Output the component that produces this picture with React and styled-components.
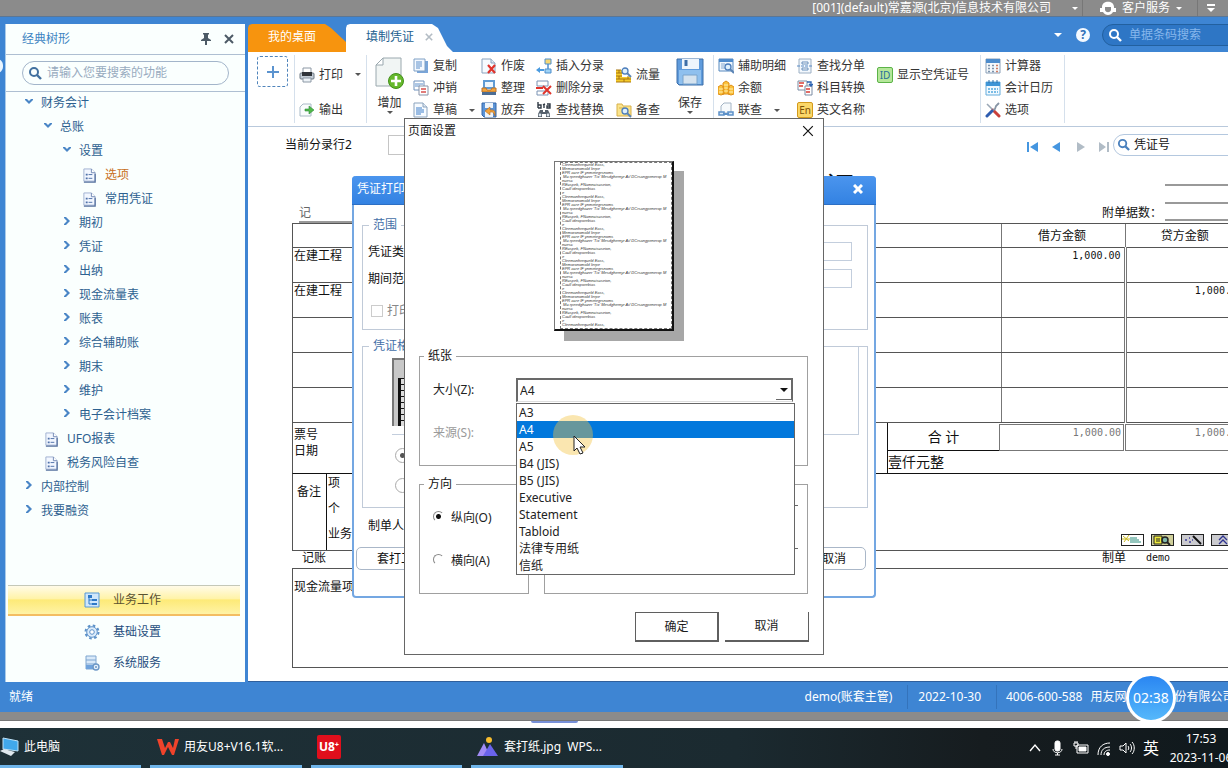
import React from 'react';
import styled, { createGlobalStyle, css } from 'styled-components';

const SANS = '"Noto Sans", "Noto Sans CJK SC", sans-serif';
const MONO = '"DejaVu Sans Mono", "Noto Sans CJK SC", monospace';

const GlobalStyle = createGlobalStyle`
  * {
    box-sizing: border-box;
  }

  body {
    margin: 0;
    overflow: hidden;
    font-family: ${SANS};
    font-size: 12px;
    line-height: 16px;
    color: #1c1c1c;
  }

  button, input, select {
    font: inherit;
    color: inherit;
    margin: 0;
    padding: 0;
  }

  button {
    border: 0;
    background: none;
    white-space: nowrap;
  }

  ul {
    list-style: none;
    margin: 0;
    padding: 0;
  }

  a {
    color: inherit;
    text-decoration: none;
  }

  svg {
    display: block;
    flex: none;
  }
`

/* ---------- icons ---------- */

const Doc = () => (
  <>
    <path d="M1 1h9l4 4v10H1z" fill="#f7fbff" stroke="#8ba3bd" />
    <path d="M10 1v4h4" fill="#dfe9f3" stroke="#8ba3bd" />
  </>
)

const Lens = ({ x = 9, y = 7, r = 3 }) => (
  <>
    <circle cx={x} cy={y} r={r} fill="#dff0fc" stroke="#4b7dbb" strokeWidth="1.3" />
    <path d={`M${x + r - 1} ${y + r - 1}l4 4`} stroke="#5b84b5" strokeWidth="2" />
  </>
)

const glyphs = {
  print: (
    <>
      <path d="M4 1h8v5H4z" fill="#fff" stroke="#8c98a5" />
      <rect x="1" y="6" width="14" height="6" rx="1" fill="#c3ccd6" stroke="#6d7883" />
      <path d="M3 5h10v4H3z" fill="#30343a" />
      <path d="M4 11h8v4H4z" fill="#eef3f8" stroke="#8c98a5" />
    </>
  ),
  output: (
    <>
      <path d="M1 5l3-3h8v12H1z" fill="#fafcfd" stroke="#a9bac6" />
      <path d="M6 7h4V4l5 4-5 4V9H6z" fill="#51b948" stroke="#2e8b3c" strokeWidth=".6" />
    </>
  ),
  copy: (
    <>
      <path d="M4 3h11v12H4z" fill="#79a5d9" />
      <path d="M1 1h11v12H1z" fill="#f4f9ff" stroke="#7fa0c5" />
      <path d="M3 4h6M3 6h6M3 8h6M3 10h4" stroke="#5c8fca" />
    </>
  ),
  offset: (
    <>
      <path d="M1 1h10v9H1z" fill="#fff" stroke="#6f91bd" />
      <path d="M2 4h8M2 6h5" stroke="#5c8fca" />
      <path d="M6 6h9v9H6z" fill="#fff" stroke="#8893a8" />
      <path d="M8 9h5M8 12h5" stroke="#d7504d" strokeWidth="1.5" />
    </>
  ),
  draft: (
    <>
      <Doc />
      <path d="M3 6h6M3 8h8M3 10h8M3 12h5" stroke="#3f7fc9" />
    </>
  ),
  void: (
    <>
      <Doc />
      <path d="M7 7l7 8M14 7l-7 8" stroke="#e0342c" strokeWidth="2.2" />
    </>
  ),
  arrange: (
    <>
      <path d="M3 1h10v7H3z" fill="#eef6fd" stroke="#5f9bd4" strokeWidth="2" />
      <path d="M1 8h4l1 2h4l1-2h4v4H1z" fill="#f2a53c" stroke="#b7702a" />
      <path d="M1 12h14v3H1z" fill="#4c6d94" />
    </>
  ),
  discard: (
    <>
      <path d="M1 1h14v14H3l-2-2z" fill="#5b93d6" stroke="#3467a8" />
      <path d="M4 1h8v5H4z" fill="#eef4fa" />
      <path d="M4 9h8v6H4z" fill="#eef4fa" />
      <path d="M14 14v-3c0-2-1-3-3-3H9V5L4 9l5 4v-3h2c1 0 2 1 3 4z" fill="#f3a33a" stroke="#b66a1b" strokeWidth=".6" />
    </>
  ),
  insert: (
    <>
      <path d="M9 1h6v5H9z" fill="#f6d673" stroke="#4f8fcc" />
      <path d="M9 11h6v4H9z" fill="#9fd2f5" stroke="#4f8fcc" />
      <path d="M12 6v5" stroke="#4f8fcc" strokeWidth="1.5" />
      <path d="M0 12l4-3v2h4v2H4v2z" fill="#4a9be0" />
    </>
  ),
  remove: (
    <>
      <path d="M1 1h11v5H1zM1 11h11v4H1z" fill="#fff" stroke="#7b93b4" />
      <path d="M0 8h7" stroke="#e0342c" strokeWidth="2" />
      <path d="M7 6l8 8M15 6l-8 8" stroke="#e0342c" strokeWidth="2" />
    </>
  ),
  replace: (
    <>
      <path d="M2 0v6M2 3h3v3H2M7 3l2-1M8 6V3M11 2h3v4h-3V4h3" fill="none" stroke="#2f3944" strokeWidth="1.4" />
      <path d="M4 8h3v2h2V8h3l2 4v3h-4v-3H6v3H2v-3z" fill="#56616c" />
      <circle cx="4" cy="13" r="1.4" fill="#dde6ee" />
      <circle cx="12" cy="13" r="1.4" fill="#dde6ee" />
    </>
  ),
  flow: (
    <>
      <path d="M0 3h6v12H0zM6 10h9v5H6z" fill="#f5cb2b" />
      <path d="M0 3h5M0 6h6M0 9h6M0 12h15M0 15h15M3 3v3M3 9v3M8 12v3M12 9v3" stroke="#a67410" />
      <Lens x={9} y={4} />
    </>
  ),
  check: (
    <>
      <path d="M1 2h5l1 2h8v10H1z" fill="#fbe48b" stroke="#d7b04a" />
      <path d="M3 6h5" stroke="#d7b04a" />
      <Lens x={9} y={9} />
    </>
  ),
  detail: (
    <>
      <path d="M1 1h14v12H1z" fill="#eff6fc" stroke="#5689bf" />
      <path d="M1 1h14v3H1z" fill="#4f8bcb" />
      <path d="M3 6h4M3 8h3M3 10h4" stroke="#86a9cf" />
      <Lens x={10} y={9} />
    </>
  ),
  balance: (
    <>
      <path d="M5 3l3-2 3 2v11H5zM0 7l3-2 3 2v7l-3 1-3-1zM10 7l3-2 3 2v7l-3 1-3-1z" fill="#fbc23c" stroke="#df8f16" />
      <path d="M1 9h4M1 12h4M6 5h4M11 9h4M11 12h4M6 8h4M6 11h4" stroke="#fff0b0" />
    </>
  ),
  link: (
    <>
      <path d="M3 4l3-3h7v10H3z" fill="#f7fafc" stroke="#a4b4c4" />
      <path d="M1 10h5v3H1zM10 10h5v3h-5z" fill="#d9e9f7" stroke="#5d91c9" strokeWidth="1.5" />
      <path d="M5 12h6" stroke="#5d91c9" strokeWidth="2" />
    </>
  ),
  split: (
    <>
      <path d="M2 1h12v14H2z" fill="#f3f8fd" stroke="#9db0c4" />
      <path d="M5 4h6v2H5zM5 10h6v2H5z" fill="#fff" stroke="#688fbc" />
      <path d="M0 8h16" stroke="#5a8bc5" strokeDasharray="3 1" />
    </>
  ),
  convert: (
    <>
      <path d="M1 1h9v9H1z" fill="#fff" stroke="#7a8ba3" />
      <path d="M2 3h5M2 6h4" stroke="#d93d36" strokeWidth="1.6" />
      <path d="M8 6h7v9H8z" fill="#fff" stroke="#7a8ba3" />
      <path d="M9 9h4M9 12h4" stroke="#d93d36" strokeWidth="1.4" />
      <path d="M10 2h4v4M12 4l2 2 2-2" fill="none" stroke="#2c62b1" strokeWidth="1.4" />
    </>
  ),
  calculator: (
    <>
      <path d="M1 1h14v14H1z" fill="#f5f8fb" stroke="#8aa0b8" />
      <path d="M1 1h14v4H1z" fill="#4d8ccc" />
      <path d="M3 7.500h2M7 7.500h2M3 10.500h2M7 10.500h2M3 13.500h2M7 13.500h2" stroke="#7c93ad" strokeWidth="1.6" />
      <path d="M11 7.500h2M11 10.500h2M11 13.500h2" stroke="#cf7b62" strokeWidth="1.6" />
    </>
  ),
  calendar: (
    <>
      <path d="M1 2h14v13H1z" fill="#f2f9fe" stroke="#64acdc" />
      <path d="M1 2h14v4H1z" fill="#3f95d6" />
      <path d="M4 0v3M8 0v3M12 0v3" stroke="#2c6ea9" />
      <path d="M3 9h10M3 12h10" stroke="#79bce6" strokeWidth="2" strokeDasharray="2 1" />
    </>
  ),
  tools: (
    <>
      <path d="M2 2l6 6" stroke="#9aa7b5" strokeWidth="1.6" />
      <path d="M8 8l6 6" stroke="#c9403b" strokeWidth="3" strokeLinecap="round" />
      <path d="M14 1l-3 3-1 3-3 2" fill="none" stroke="#8795a5" strokeWidth="1.8" />
      <path d="M7 9l-5 5" stroke="#2f5db0" strokeWidth="3" strokeLinecap="round" />
    </>
  ),
  leaf: (
    <>
      <path d="M2 1h8l4 4v9H2z" fill="#f2f7ff" stroke="#9fb0d0" />
      <path d="M10 1v4h4" fill="#fff" stroke="#7289b4" />
      <path d="M5 6v2M5 10v2" stroke="#4d70a8" strokeWidth="2" />
      <path d="M7 7h4M7 11h4" stroke="#4d70a8" />
      <path d="M2 15h12V6" fill="none" stroke="#56719f" strokeWidth="1.4" />
    </>
  ),
  work: (
    <>
      <path d="M1 1h14v14H1z" fill="#cfe7fb" stroke="#5799d6" />
      <path d="M4 3h4v3H4zM8 7h5v2H8zM8 11h5v2H8z" fill="#2d79c7" />
      <path d="M5 6v6h4M5 8h4" fill="none" stroke="#2d79c7" />
    </>
  ),
  gear: (
    <>
      <circle cx="8" cy="8" r="6.500" fill="none" stroke="#5e92c9" strokeWidth="2" strokeDasharray="2.600 2.500" />
      <circle cx="8" cy="8" r="5.300" fill="#dcecfb" stroke="#5e92c9" />
      <circle cx="8" cy="8" r="2.300" fill="#fff" stroke="#5e92c9" />
    </>
  ),
  service: (
    <>
      <path d="M2 1h10v13H2z" fill="#d8e9f9" stroke="#7ea6d0" />
      <path d="M2 5h10M2 9h10" stroke="#7ea6d0" />
      <path d="M2 10h8v4H2z" fill="#6fa3dc" />
      <circle cx="12" cy="12" r="3" fill="#e6f1fb" stroke="#6c97c6" strokeWidth="1.4" />
      <circle cx="12" cy="12" r="1" fill="#6c97c6" />
    </>
  ),
}

const Icon = ({ name, size = 16 }) => (
  <svg width={size} height={size} viewBox="0 0 16 16" fill="none" aria-hidden="true">{glyphs[name]}</svg>
)

const SearchIcon = ({ color, size = 14 }) => (
  <svg width={size} height={size} viewBox="0 0 14 14" fill="none" stroke={color} aria-hidden="true">
    <circle cx="6" cy="6" r="4" strokeWidth="2" />
    <path d="M9 9l4 4" strokeWidth="2.400" />
  </svg>
)

const Cross = ({ size = 10, weight = 2, color = '#4c5a66' }) => (
  <svg width={size} height={size} viewBox="0 0 10 10" stroke={color} strokeWidth={weight} aria-hidden="true">
    <path d="M1 1l8 8M9 1l-8 8" />
  </svg>
)

const Caret = styled.span`
  flex: none;
  width: 0;
  height: 0;
  border: 3px solid transparent;
  border-top-color: ${p => p.$color || '#555'};
  border-bottom: 0;
`

/* ---------- frame ---------- */

const Page = styled.div`
  position: relative;
  min-height: 100vh;
  display: flex;
  flex-direction: column;
  overflow: hidden;
  background-color: #fff;
`

const TitleBar = styled.header`
  height: 17px;
  display: flex;
  justify-content: flex-end;
  overflow: hidden;
  background-color: #8b8b8b;
  border-bottom: 1px solid #5b7694;
  color: white;
  line-height: 14px;
  white-space: nowrap;
`

const TitlePart = styled.div`
  display: flex;
  align-items: center;
  gap: ${p => p.$gap || 6}px;
  padding: 0 ${p => p.$right || 0}px 0 ${p => p.$left || 0}px;
  border-right: ${p => (p.$last ? 0 : 1)}px solid #777;
`

const Workspace = styled.div`
  flex: 1;
  display: grid;
  grid-template-columns: 5px 240px 1fr;
  background-color: #3e85d3;
`

const Rail = styled.div`
  overflow: hidden;
  padding-top: 42px;
`

const RailButton = styled.button`
  display: block;
  width: 12px;
  height: 14px;
  margin-left: -9px;
  border: 3px solid #e9f5ff;
  border-radius: 7px;
`

/* ---------- side tree ---------- */

const Side = styled.aside`
  display: flex;
  flex-direction: column;
  margin-top: 7px;
  background-color: #fafffe;
  border-left: 1px solid #a9cbea;
`

const SideHead = styled.div`
  height: 31px;
  display: flex;
  align-items: center;
  gap: 12px;
  padding: 0 11px 0 16px;
  border-bottom: 1px solid #aebfd2;
  color: #3d84c2;
`

const SideTitle = styled.span`
  flex: 1;
`

const SideSearch = styled.label`
  display: flex;
  align-items: center;
  gap: 5px;
  height: 24px;
  margin: 6px 16px 6px 16px;
  padding: 0 5px;
  border: 1px solid #a3b5ca;
  border-radius: 12px;
`

const SearchInput = styled.input`
  flex: 1;
  min-width: 0;
  border: 0;
  outline: 0;
  background: none;

  &::placeholder {
    color: ${p => p.$hint};
    opacity: 1;
  }
`

const Tree = styled.ul`
  flex: 1;
  border-top: 1px solid #aebfd2;
`

const TreeRow = styled.li`
  height: 24px;
  padding-left: ${p => 19 + p.$level * 19}px;
`

const TreeLink = styled.a`
  display: flex;
  align-items: center;
  gap: 8px;
  height: 22px;
  color: ${p => (p.$hot ? '#c8701c' : '#2d6190')};
`

const tree = [
  [0, 'open', '财务会计'],
  [1, 'open', '总账'],
  [2, 'open', '设置'],
  [3, 'leaf', '选项', true],
  [3, 'leaf', '常用凭证'],
  [2, 'shut', '期初'],
  [2, 'shut', '凭证'],
  [2, 'shut', '出纳'],
  [2, 'shut', '现金流量表'],
  [2, 'shut', '账表'],
  [2, 'shut', '综合辅助账'],
  [2, 'shut', '期末'],
  [2, 'shut', '维护'],
  [2, 'shut', '电子会计档案'],
  [1, 'leaf', 'UFO报表'],
  [1, 'leaf', '税务风险自查'],
  [0, 'shut', '内部控制'],
  [0, 'shut', '我要融资'],
]

const Arrow = ({ open }) => (
  <svg width="8" height="12" viewBox="0 0 8 12" fill="#4a86c6" aria-hidden="true">
    <path d={open ? 'M0 2h2l2 2 2-2h2v1L4 7 0 3z' : 'M1 0h2l4 4-4 4H1V7l3-3-3-3z'} />
  </svg>
)

const SideNav = styled.nav`
  padding: 0 5px 4px 2px;
`

const SideNavLink = styled.a`
  display: flex;
  align-items: center;
  gap: 13px;
  height: 31px;
  padding-left: 76px;
  color: #274f80;

  ${p => p.$active && css`
    background: linear-gradient(#fffbe8, #fff3a8 45%, #fdea78 50%, #fff3a6);
    border-top: 1px solid #c4c8b8;
    border-bottom: 2px solid #f3bd62;
    color: #5a5230;
  `}
`

const Sidebar = () => (
  <Side>
    <SideHead>
      <SideTitle>经典树形</SideTitle>
      <svg width="12" height="12" viewBox="0 0 12 12" fill="#4c5a66" aria-hidden="true">
        <path d="M3 0h6v1L8 2v3l3 2v1H7v4H5V8H1V7l3-2V2L3 1z" />
      </svg>
      <button aria-label="关闭"><Cross /></button>
    </SideHead>
    <SideSearch>
      <SearchIcon color="#41709f" />
      <SearchInput $hint="#98abbe" placeholder="请输入您要搜索的功能" aria-label="搜索功能" />
    </SideSearch>
    <Tree>
      {tree.map(([level, kind, label, hot]) => (
        <TreeRow key={label} $level={level}>
          <TreeLink href="#" $hot={hot}>
            {kind === 'leaf' ? <Icon name="leaf" size={15} /> : <Arrow open={kind === 'open'} />}
            {label}
          </TreeLink>
        </TreeRow>
      ))}
    </Tree>
    <SideNav>
      <SideNavLink href="#" $active><Icon name="work" />业务工作</SideNavLink>
      <SideNavLink href="#"><Icon name="gear" />基础设置</SideNavLink>
      <SideNavLink href="#"><Icon name="service" />系统服务</SideNavLink>
    </SideNav>
  </Side>
)

/* ---------- tabs ---------- */

const Main = styled.main`
  min-width: 0;
  display: flex;
  flex-direction: column;
  margin-left: 3px;
  border-bottom: 1px solid #2f5f9c;
  overflow: hidden;
`

const TabBar = styled.div`
  display: flex;
  height: 35px;
  padding-top: 7px;
`

const Tab = styled.button`
  display: flex;
  align-items: center;
  gap: 11px;
  width: ${p => p.$width}px;
  padding: 0 0 2px 20px;
  background-color: ${p => (p.$active ? '#fff' : '#f7940e')};
  color: ${p => (p.$active ? '#22608f' : '#fff')};
  clip-path: polygon(0 4px, 1px 1px, 4px 0, calc(100% - 21px) 0, calc(100% - 15px) 4px, ${p => (p.$active ? 'calc(100% - 6px) 22px, 100% 100%' : '100% 18px, 100% 100%')}, 0 100%);
`

const TabTools = styled.div`
  flex: 1;
  display: flex;
  justify-content: flex-end;
  align-items: flex-start;
  gap: 12px;
`

const Help = styled.button`
  width: 14px;
  height: 14px;
  margin: 4px 0;
  border-radius: 7px;
  background-color: #f4f9ff;
  color: #2f70b8;
  font-weight: 700;
  line-height: 14px;
`

const ToolCaret = styled(Caret)`
  margin: 9px 2px 0 0;
  border-width: 4px 4px 0;
`

const BarcodeSearch = styled.label`
  display: flex;
  align-items: center;
  gap: 7px;
  width: 160px;
  height: 22px;
  margin-right: -34px;
  padding-left: 5px;
  border: 1px solid #22609f;
  border-radius: 11px;
  background-color: #2e76c5;
`

/* ---------- ribbon ---------- */

const Ribbon = styled.div`
  display: flex;
  height: 75px;
  padding: 3px 0 3px 8px;
  background-color: #fff;
  border-bottom: 1px solid #b9c9dc;
`

const AddBox = styled.button`
  width: 31px;
  height: 31px;
  margin: 1px 6px 0 1px;
  border: 1px dashed #4f84bb;
  border-radius: 3px;
  display: grid;
  place-items: center;
`

const Group = styled.div`
  display: flex;
  padding: 0 0 0 4px;
  border-left: 1px solid #d5e0ec;
`

const RibbonColumn = styled.div`
  width: ${p => p.$width}px;
  display: flex;
  flex-direction: column;
  padding-top: ${p => (p.$loose ? 2 : 0)}px;
`

const RibbonButton = styled.button`
  flex: none;
  display: flex;
  align-items: center;
  gap: 4px;
  height: ${p => (p.$loose ? 35 : 22)}px;
  color: #333;

  ${Caret} {
    margin-left: 8px;
  }
`

const BigButton = styled.button`
  width: ${p => p.$width}px;
  display: flex;
  flex-direction: column;
  align-items: center;
  padding: 2px ${p => p.$right || 0}px 0 0;
  color: #333;

  svg {
    margin-bottom: 6px;
  }
`

const TextIcon = styled.span`
  width: 16px;
  height: 16px;
  border: 1px solid ${p => p.$edge};
  border-radius: 2px;
  background-color: ${p => p.$fill};
  color: ${p => p.$ink};
  font-size: 10px;
  line-height: 14px;
  text-align: center;
`

const Column = ({ width, loose, items }) => (
  <RibbonColumn $width={width} $loose={loose}>
    {items.map(([icon, label, caret]) => (
      <RibbonButton key={label} $loose={loose}>
        {icon === 'en' && <TextIcon $edge="#d39a1c" $fill="#fbd768" $ink="#7c5206">En</TextIcon>}
        {icon === 'id' && <TextIcon $edge="#5cb348" $fill="#b5e79a" $ink="#286f9a">ID</TextIcon>}
        {glyphs[icon] && <Icon name={icon} />}
        {label}
        {caret && <Caret />}
      </RibbonButton>
    ))}
  </RibbonColumn>
)

const RibbonBar = () => (
  <Ribbon>
    <AddBox aria-label="添加">
      <svg width="14" height="14" viewBox="0 0 14 14" stroke="#5b93cf" strokeWidth="2"><path d="M7 1v12M1 7h12" /></svg>
    </AddBox>
    <Group>
      <Column loose width={67} items={[['print', '打印', true], ['output', '输出']]} />
    </Group>
    <Group>
      <BigButton $width={42} $right={5}>
        <svg width="30" height="32" viewBox="0 0 30 32">
          <path d="M8 1h18v28H1V8z" fill="#f1f5f4" stroke="#9aa8ae" />
          <path d="M8 1v7H1z" fill="#fff" stroke="#9aa8ae" />
          <circle cx="21" cy="24" r="7.500" fill="#66b82c" stroke="#42901a" />
          <path d="M21 19v10M16 24h10" stroke="#fff" strokeWidth="2.600" />
        </svg>
        增加
        <Caret />
      </BigButton>
      <Column width={68} items={[['copy', '复制'], ['offset', '冲销'], ['draft', '草稿', true]]} />
      <Column width={55} items={[['void', '作废'], ['arrange', '整理'], ['discard', '放弃']]} />
      <Column width={80} items={[['insert', '插入分录'], ['remove', '删除分录'], ['replace', '查找替换']]} />
      <Column loose width={55} items={[['flow', '流量'], ['check', '备查']]} />
      <BigButton $width={42} $right={4}>
        <svg width="28" height="32" viewBox="0 0 28 32">
          <path d="M1 2h26v26H3l-2-2z" fill="#5f9bdc" stroke="#3d6ea8" />
          <path d="M6 2h17v10H6z" fill="#eef5fc" />
          <path d="M10 3v6" stroke="#3d6ea8" strokeWidth="3" />
          <path d="M3 13h22v14H3z" fill="#8fc0ee" />
          <path d="M7 18h14v9H7z" fill="#d5e3ef" stroke="#7ba4cc" />
        </svg>
        保存
        <Caret />
      </BigButton>
    </Group>
    <Group>
      <Column width={79} items={[['detail', '辅助明细'], ['balance', '余额'], ['link', '联查', true]]} />
      <Column width={80} items={[['split', '查找分单'], ['convert', '科目转换'], ['en', '英文名称']]} />
      <Column loose width={103} items={[['id', '显示空凭证号']]} />
    </Group>
    <Group>
      <Column width={79} items={[['calculator', '计算器'], ['calendar', '会计日历'], ['tools', '选项']]} />
    </Group>
    <Group />
  </Ribbon>
)

/* ---------- voucher ---------- */

const Voucher = styled.section`
  flex: 1;
  padding-left: 44px;
  background-color: #fff;
  color: #111;
`

const EntryBar = styled.div`
  display: flex;
  align-items: center;
  height: 35px;
  margin-left: -7px;
`

const EntryInput = styled.input`
  width: 120px;
  height: 20px;
  margin-left: 36px;
  border: 1px solid #c5c5c5;
`

const Pager = styled.div`
  flex: 1;
  display: flex;
  justify-content: flex-end;
  gap: 12px;
  padding: 4px 3px 0 0;
`

const NumberSearch = styled.label`
  display: flex;
  align-items: center;
  gap: 4px;
  width: 135px;
  height: 22px;
  margin-right: -20px;
  padding-left: 3px;
  border: 1px solid #b4c8df;
  border-radius: 11px;
`

const VoucherTitle = styled.h1`
  height: 39px;
  margin: 0;
  padding: 8px 0 0 54px;
  text-align: center;
  font-size: 28px;
  font-weight: 400;
  line-height: 32px;
`

const VoucherHead = styled.div`
  display: flex;
  justify-content: space-between;
  align-items: flex-end;
  height: 22px;
  padding-left: 7px;
`

const Word = styled.span`
  width: 120px;
  border-bottom: 2px solid #999;
  color: #666;
`

const Attachments = styled.div`
  display: flex;
  align-items: flex-end;
  gap: 3px;
  line-height: 20px;
`

const Rules = styled.div`
  width: 63px;
  height: 37px;
  margin-bottom: 2px;
  border: solid #999;
  border-width: 2px 0;
  display: grid;
  align-items: center;

  &::after {
    content: '';
    border-top: 2px solid #999;
  }
`

const Table = styled.table`
  width: calc(100% + 18px);
  table-layout: fixed;
  border-collapse: collapse;
  border-left: 1px solid #555;

  th, td {
    height: 35px;
    padding: 0 3px 0 1px;
    border-top: 1px solid #555;
    border-bottom: 1px solid #555;
    vertical-align: top;
    text-align: left;
    font-weight: 400;
  }

  th {
    height: 24px;
    padding-top: 1px;
    vertical-align: middle;
    text-align: center;
  }
`

const Money = styled.td`
  &&, & {
    border-left: ${p => (p.$double ? '3px double' : '1px solid')} #777;
    text-align: right;
    font-family: ${MONO};
    font-size: 10px;
  }
`

const MoneyHead = styled.th`
  border-left: 1px solid #777;
`

const Summary = styled.div`
  display: grid;
  grid-template-columns: 1fr 111px 126px 122px;
  grid-template-rows: 28px 22px;
  margin-right: -19px;
  border-left: 1px solid #555;
  border-bottom: 1px solid #111;
`

const Ticket = styled.div`
  grid-row: 1 / 3;
  padding: 4px 1px;
  border-right: 1px solid #111;
`

const Total = styled.div`
  display: grid;
  place-items: center;
  border-bottom: 1px solid #111;
  font-size: 14px;
`

const TotalMoney = styled.div`
  margin: 1px 1px 0 0;
  padding-right: 2px;
  border: 1px solid #777;
  font: 10px/16px ${MONO};
  color: #777;
  text-align: right;
`

const Words = styled.div`
  grid-column: 2 / 5;
  font-size: 14px;
  line-height: 22px;
`

const Remarks = styled.div`
  display: grid;
  grid-template-columns: 34px 1fr auto;
  height: 77px;
  border-left: 1px solid #555;
  border-bottom: 1px solid #555;
`

const RemarkLabel = styled.div`
  padding: 10px 4px;
  border-right: 1px solid #111;
  white-space: nowrap;
`

const RemarkLines = styled.div`
  display: flex;
  flex-direction: column;
  justify-content: space-between;
  padding: 1px 0 8px 1px;
`

const MiniBar = styled.div`
  display: flex;
  align-items: flex-end;
  gap: 7px;
  margin-right: -6px;
  padding-bottom: 4px;
`

const MiniButton = styled.button`
  width: 23px;
  height: 12px;
  border: 1px solid #222;
  background-color: ${p => p.$fill};
`

const Signatures = styled.div`
  display: flex;
  justify-content: space-between;
  height: 17px;
  padding: 0 58px 0 10px;
  line-height: 14px;
`

const Maker = styled.span`
  display: flex;
  gap: 20px;

  span {
    font: 10px/14px ${MONO};
  }
`

const CashFlow = styled.div`
  height: 100px;
  margin-right: -17px;
  padding: 10px 1px;
  border: 1px solid #555;
`

const pagerShapes = [
  ['首张', 'M1 1h2v10H1zM12 1v10L4 6z', '#4596e0'],
  ['上张', 'M10 1v10L2 6z', '#4596e0'],
  ['下张', 'M3 1v10l8-5z', '#b1bcc6'],
  ['末张', 'M1 1v10l7-5zM9 1h2v10H9z', '#b1bcc6'],
]

const VoucherSheet = () => (
  <Voucher>
    <EntryBar>
      <label htmlFor="entry">当前分录行2</label>
      <EntryInput id="entry" />
      <Pager>
        {pagerShapes.map(([label, d, fill]) => (
          <button key={label} aria-label={label}>
            <svg width="12" height="12" viewBox="0 0 12 12" fill={fill}><path d={d} /></svg>
          </button>
        ))}
      </Pager>
      <NumberSearch>
        <SearchIcon color="#4a80bd" size={13} />
        <SearchInput defaultValue="凭证号" aria-label="凭证号" />
      </NumberSearch>
    </EntryBar>
    <VoucherTitle>记 账 凭 证</VoucherTitle>
    <VoucherHead>
      <Word>记</Word>
      <Attachments>附单据数：<Rules /></Attachments>
    </VoucherHead>
    <Table>
      <colgroup>
        <col />
        <col style={{ width: 124 }} />
        <col style={{ width: 121 }} />
      </colgroup>
      <thead>
        <tr><th aria-label="摘要" /><MoneyHead>借方金额</MoneyHead><MoneyHead>贷方金额</MoneyHead></tr>
      </thead>
      <tbody>
        <tr><td>在建工程</td><Money>1,000.00</Money><Money $double /></tr>
        <tr><td>在建工程</td><Money /><Money $double>1,000.00</Money></tr>
        <tr><td /><Money /><Money $double /></tr>
        <tr><td /><Money /><Money $double /></tr>
        <tr><td /><Money /><Money $double /></tr>
      </tbody>
    </Table>
    <Summary>
      <Ticket>票号<br />日期</Ticket>
      <Total>合 计</Total>
      <TotalMoney>1,000.00</TotalMoney>
      <TotalMoney>1,000.00</TotalMoney>
      <Words>壹仟元整</Words>
    </Summary>
    <Remarks>
      <RemarkLabel>备注</RemarkLabel>
      <RemarkLines><span>项</span><span>个</span><span>业务</span></RemarkLines>
      <MiniBar>
        <MiniButton $fill="#fff" aria-label="新增">
          <svg width="21" height="10" viewBox="0 0 21 10" fill="none"><path d="M1 1l6 5M7 0L2 7M0 4h8" stroke="#c9b91f" /><path d="M8 3h7M8 5h9M8 7h11" stroke="#2a8d7c" /></svg>
        </MiniButton>
        <MiniButton $fill="#cfcf9a" aria-label="查看">
          <svg width="21" height="10" viewBox="0 0 21 10" fill="none"><path d="M2 1h8v8H2z" fill="#ece83c" stroke="#222" /><path d="M4 4h4M4 6h4" stroke="#222" /><circle cx="13" cy="5" r="3" fill="#7fb7ab" stroke="#222" strokeWidth="1.500" /><path d="M15 7l3 3" stroke="#222" strokeWidth="2" /></svg>
        </MiniButton>
        <MiniButton $fill="#cbcbcf" aria-label="工具">
          <svg width="21" height="10" viewBox="0 0 21 10" fill="none"><path d="M11 1l8 8" stroke="#111" strokeWidth="2" /><path d="M3 5h2M7 3h1M7 7h2M10 5h1" stroke="#4242a0" strokeWidth="1.500" /></svg>
        </MiniButton>
        <MiniButton $fill="#cbcbcf" aria-label="收起">
          <svg width="21" height="10" viewBox="0 0 21 10" fill="none" stroke="#2e3390" strokeWidth="1.300"><path d="M7 5l4-4 4 4M7 9l4-4 4 4" /></svg>
        </MiniButton>
      </MiniBar>
    </Remarks>
    <Signatures>
      <span>记账</span>
      <Maker>制单<span>demo</span></Maker>
    </Signatures>
    <CashFlow>现金流量项</CashFlow>
  </Voucher>
)

/* ---------- floating windows ---------- */

const Window = styled.div`
  position: absolute;
  display: flex;
  flex-direction: column;
  background-color: #fff;
`

const PrintWindow = styled(Window)`
  left: 352px;
  top: 176px;
  width: 524px;
  height: 422px;
  border: 2px solid #74a7e2;
  border-top: 0;
  border-radius: 4px;
  color: #111;
`

const PrintHead = styled.div`
  display: flex;
  justify-content: space-between;
  align-items: center;
  height: 29px;
  margin: 0 -2px;
  padding: 0 13px 2px 5px;
  border-radius: 4px 4px 0 0;
  background: linear-gradient(#4b95ee, #3382e2);
  border-bottom: 1px solid #2c6fc4;
  color: #fff;
`

const Box = styled.fieldset`
  min-width: 0;
  margin: 0;
  padding: 0;
  border: 1px solid ${p => p.$edge || '#a0a0a0'};

  legend {
    height: 16px;
    margin-left: ${p => (p.$edge ? 6 : 4)}px;
    padding: 0 4px;
    line-height: 16px;
    color: ${p => (p.$edge ? '#4470a8' : '#111')};
  }
`

const PrintBody = styled.div`
  flex: 1;
  display: flex;
  flex-direction: column;
  padding: 12px 6px 0 8px;
`

const RangeBox = styled(Box)`
  height: 113px;
  padding-top: 5px;
`

const FormatBox = styled(Box)`
  height: 170px;
  margin-top: 8px;
`

const RangeRow = styled.label`
  display: flex;
  justify-content: space-between;
  align-items: center;
  height: 27px;
  padding: 0 15px 0 5px;
`

const RangeInput = styled.input`
  width: 400px;
  height: 19px;
  border: 1px solid #c3cedd;
`

const TickRow = styled.label`
  display: flex;
  align-items: center;
  gap: 4px;
  height: 38px;
  padding-left: 8px;
  color: #888;

  input {
    appearance: none;
    width: 12px;
    height: 12px;
    border: 1px solid #ccc;
  }
`

const FormatPreview = styled.div`
  display: flex;
  height: 88px;
  margin: -7px 8px 5px 29px;
  padding: 11px 0 0;
  border: 1px solid #c3cedd;
  border-left: 0;
  border-top: 0;
`

const Thumb = styled.div`
  width: 160px;
  height: 68px;
  padding: 18px 0 0 4px;
  border: solid #777;
  border-width: 2px 0 0 2px;
  background-color: #c8c8c8;

  div {
    height: 100%;
    border-left: 3px solid #111;
    background: repeating-linear-gradient(#111 0 1px, #ddd 1px 6px);
  }
`

const RadioRow = styled.label`
  display: flex;
  align-items: center;
  height: 30px;
  padding-left: 32px;

  input {
    appearance: none;
    width: 15px;
    height: 15px;
    border: 1px solid #aaa;
    border-radius: 8px;
  }

  input:checked {
    background: radial-gradient(#555 0 2px, transparent 3px);
  }
`

const MakerRow = styled.div`
  padding: 10px 0 0 6px;
`

const PrintActions = styled.div`
  display: flex;
  justify-content: space-between;
  margin: 13px 2px 0 -6px;
`

const RoundButton = styled.button`
  width: ${p => p.$width}px;
  height: 23px;
  border: 1px solid #aab7c8;
  border-radius: 5px;
  background-color: #fff;
`

const PrintDialog = () => (
  <PrintWindow role="dialog" aria-label="凭证打印">
    <PrintHead>凭证打印<button aria-label="关闭"><Cross weight={3} color="#fff" /></button></PrintHead>
    <PrintBody>
      <RangeBox $edge="#c0cad8">
        <legend>范围</legend>
        <RangeRow>凭证类别<RangeInput /></RangeRow>
        <RangeRow>期间范围<RangeInput /></RangeRow>
        <TickRow><input type="checkbox" disabled />打印</TickRow>
      </RangeBox>
      <FormatBox $edge="#c0cad8">
        <legend>凭证格式</legend>
        <FormatPreview><Thumb><div /></Thumb></FormatPreview>
        <RadioRow><input type="radio" name="format" aria-label="金额式" defaultChecked /></RadioRow>
        <RadioRow><input type="radio" name="format" aria-label="外币式" /></RadioRow>
      </FormatBox>
      <MakerRow>制单人</MakerRow>
      <PrintActions>
        <RoundButton $width={90}>套打工具</RoundButton>
        <RoundButton $width={64}>取消</RoundButton>
      </PrintActions>
    </PrintBody>
  </PrintWindow>
)

const SetupWindow = styled(Window)`
  left: 404px;
  top: 118px;
  width: 420px;
  height: 537px;
  border: 1px solid #666;
`

const SetupHead = styled.div`
  display: flex;
  justify-content: space-between;
  align-items: center;
  height: 24px;
  padding: 0 9px 0 3px;
`

const Sheet = styled.div`
  width: 120px;
  height: 170px;
  margin: 18px 0 0 149px;
  padding: 0 0 0 5px;
  border: 1px solid #777;
  border-right: 2px solid #111;
  border-bottom: 2px solid #111;
  box-shadow: 10px 10px 0 #a7a7a7;
`

const SheetText = styled.div`
  height: 100%;
  overflow: hidden;
  padding-left: 1px;
  border: 1px dashed #777;
  font: italic 4px/4px "Liberation Sans", sans-serif;
  color: #333;
  white-space: pre;
`

const SetupBody = styled.div`
  display: flex;
  flex-direction: column;
  padding: 17px 15px 0 14px;
`

const PaperBox = styled(Box)`
  height: 118px;

  legend + div {
    margin-top: 14px;
  }
`

const PaperRow = styled.div`
  display: grid;
  grid-template-columns: 83px 1fr;
  align-items: center;
  height: ${p => p.$height}px;
  padding-left: 13px;
  color: ${p => (p.$dim ? '#9a9a9a' : '#222')};
`

const SelectFrame = styled.div`
  position: relative;
`

const PaperSelect = styled.select`
  appearance: none;
  display: block;
  width: 277px;
  height: 24px;
  padding-left: 2px;
  border: solid #696969;
  border-width: 2px 1px 1px 2px;
  border-bottom-color: #ddd;
  border-radius: 0;
  background-color: #fff;
  outline: 0;
`

const DropMark = styled.span`
  position: absolute;
  left: 260px;
  top: 2px;
  width: 16px;
  height: 20px;
  display: grid;
  place-items: center;
  border: solid #696969;
  border-width: 0 1px 1px 0;
  pointer-events: none;

  ${Caret} {
    border-width: 4px 4px 0;
  }
`

const PaperMenu = styled.ul`
  position: absolute;
  z-index: 1;
  left: 0;
  top: 25px;
  width: 279px;
  border: 1px solid #666;
  background-color: #fff;
`

const PaperOption = styled.li`
  height: 17px;
  padding-left: 2px;
  line-height: 17px;
  color: ${p => (p.$picked ? '#fff' : '#222')};
  background-color: ${p => (p.$picked ? '#0278dc' : '#fff')};
`

const LowerBoxes = styled.div`
  display: grid;
  grid-template-columns: 110px 1fr;
  gap: 15px;
  margin-top: 10px;
`

const LowerBox = styled(Box)`
  height: 118px;
  padding-top: 4px;
`

const WayRow = styled.label`
  display: flex;
  align-items: center;
  gap: 7px;
  height: 43px;
  padding-left: 13px;

  input {
    appearance: none;
    width: 11px;
    height: 11px;
    margin: 0 0 2px;
    border: 1px solid #888;
    border-right-color: transparent;
    border-bottom-color: transparent;
    border-radius: 6px;
  }

  input:checked {
    background: radial-gradient(#111 0 2px, transparent 3px);
  }
`

const MarginGrid = styled.div`
  display: grid;
  grid-template-columns: 1fr 1fr;
  gap: 21px 20px;
  padding: 9px 9px 0;

  input {
    min-width: 0;
    height: 22px;
    border: 0;
    border-top: 1px solid #666;
  }
`

const Actions = styled.div`
  display: flex;
  justify-content: flex-end;
  gap: 6px;
  margin: 18px -1px 0 0;
`

const ClassicButton = styled.button`
  width: 84px;
  height: 30px;
  border: solid #5f5f5f;
  border-width: ${p => (p.$primary ? '1px 2px 2px 1px' : '0 1px 2px 0')};
  background-color: #fff;
`

const sampleLines = [
  'Cleemanhrequeld Eass,',
  'Memoronomold Ierpe',
  'EPR acre IF ynmetegrsnoms',
  " Mu rpeedghazer 'Tix' Mesdghernyr Ai/ DCrsangpenerop M",
  'nuesc',
  'REuspek, FNamncisuseion,',
  'Caull ideoporebias',
  'e',
]
const sample = Array.from({ length: 41 }, (_, i) => sampleLines[i % 8]).join('\n')

const papers = ['A3', 'A4', 'A5', 'B4 (JIS)', 'B5 (JIS)', 'Executive', 'Statement', 'Tabloid', '法律专用纸', '信纸']

const PageSetup = () => (
  <SetupWindow role="dialog" aria-label="页面设置">
    <SetupHead>页面设置<button aria-label="关闭"><Cross size={12} weight={1} color="#111" /></button></SetupHead>
    <Sheet><SheetText>{sample}</SheetText></Sheet>
    <SetupBody>
      <PaperBox>
        <legend>纸张</legend>
        <PaperRow $height={24}>
          <label htmlFor="paper">大小(Z):</label>
          <SelectFrame>
            <PaperSelect id="paper" defaultValue="A4">
              {papers.map(p => <option key={p}>{p}</option>)}
            </PaperSelect>
            <DropMark><Caret $color="#111" /></DropMark>
            <PaperMenu role="listbox" aria-label="纸张大小">
              {papers.map(p => (
                <PaperOption key={p} role="option" aria-selected={p === 'A4'} $picked={p === 'A4'}>{p}</PaperOption>
              ))}
            </PaperMenu>
          </SelectFrame>
        </PaperRow>
        <PaperRow $height={62} $dim>来源(S):</PaperRow>
      </PaperBox>
      <LowerBoxes>
        <LowerBox>
          <legend>方向</legend>
          <WayRow><input type="radio" name="way" defaultChecked />纵向(O)</WayRow>
          <WayRow><input type="radio" name="way" />横向(A)</WayRow>
        </LowerBox>
        <LowerBox>
          <legend aria-label="页边距" />
          <MarginGrid>
            <input aria-label="左" /><input aria-label="右" /><input aria-label="上" /><input aria-label="下" />
          </MarginGrid>
        </LowerBox>
      </LowerBoxes>
      <Actions>
        <ClassicButton $primary>确定</ClassicButton>
        <ClassicButton>取消</ClassicButton>
      </Actions>
    </SetupBody>
  </SetupWindow>
)

const Pointer = styled.div`
  position: absolute;
  z-index: 2;
  left: 553px;
  top: 415px;
  width: 40px;
  height: 40px;
  padding: 20px 0 0 20px;
  border-radius: 20px;
  background-color: rgba(244, 196, 66, 0.42);
  pointer-events: none;
`

/* ---------- status and task bars ---------- */

const StatusBar = styled.footer`
  display: flex;
  align-items: center;
  height: 30px;
  padding-left: 9px;
  background-color: #3e85d3;
  color: #fff;
  white-space: nowrap;
`

const StatusCell = styled.span`
  padding: 0 15px 0 10px;
  border-right: 1px solid #3473bb;
  line-height: 24px;
`

const StatusSpace = styled.span`
  flex: 1;
`

const PhoneCell = styled.span`
  display: flex;
  gap: 8px;
  width: 231px;
  padding-left: 9px;
  overflow: hidden;
`

const Timer = styled.div`
  position: absolute;
  right: 52px;
  bottom: 45px;
  width: 50px;
  height: 50px;
  border: 3px solid #fff;
  border-radius: 25px;
  background: linear-gradient(#2a86f2, #55b8fb);
  color: #fff;
  font-size: 14px;
  line-height: 44px;
  text-align: center;
`

const GreyStrip = styled.div`
  height: 9px;
  background-color: #8b8b8b;
  border-bottom: 1px solid #777;
`

const WhiteStrip = styled.div`
  height: 7px;
  padding-left: 531px;
  background-color: #fff;
`

const Grip = styled.div`
  width: 47px;
  height: 2px;
  border-bottom: 2px solid #7891d8;
  border-radius: 0 0 4px 4px;
`

const TaskBar = styled.nav`
  display: flex;
  height: 40px;
  gap: 9px;
  background: linear-gradient(90deg, #1e3138, #1b2a30 60%, #161c1f 80%, #10191d);
  color: #fff;
`

const Task = styled.button`
  display: flex;
  align-items: center;
  gap: 5px;
  width: ${p => p.$width}px;
  padding-left: ${p => p.$left}px;
  border-bottom: 3px solid #6fb5ea;
  text-align: left;
  white-space: pre;
`

const Tray = styled.div`
  flex: 1;
  display: flex;
  justify-content: flex-end;
  align-items: center;
  gap: 8px;
  margin-right: -7px;
`

const Lang = styled.span`
  font-size: 16px;
`

const Clock = styled.time`
  display: flex;
  flex-direction: column;
  width: 68px;
  line-height: 19px;
  text-align: center;
  white-space: nowrap;
`

const U8Logo = styled.span`
  width: 24px;
  height: 24px;
  border-radius: 2px;
  background-color: #e00f1c;
  font-weight: 700;
  line-height: 24px;
  text-align: center;
`

const Taskbar = () => (
  <TaskBar>
    <Task $width={141} $left={0}>
      <svg width="19" height="20" viewBox="0 0 19 20">
        <path d="M3 1l15 3v10L3 12z" fill="#41a8ea" stroke="#bfe2f7" />
        <path d="M0 14l4-2 11 3-4 4z" fill="#dfe8ee" />
      </svg>
      此电脑
    </Task>
    <Task $width={152} $left={7}>
      <svg width="22" height="16" viewBox="0 0 22 16">
        <path d="M0 0h5l3 9 3-6h2l3 6 2-9h4l-5 16h-2l-4-8-4 8H5z" fill="#f0432b" />
      </svg>
      用友U8+V16.1软...
    </Task>
    <Task $width={151} $left={6} aria-label="U8+">
      <U8Logo>U8⁺</U8Logo>
    </Task>
    <Task $width={152} $left={6}>
      <svg width="22" height="20" viewBox="0 0 22 20">
        <path d="M0 19L7 6l6 13z" fill="#a18bf5" />
        <path d="M6 19l7-12 8 12z" fill="#6a63ec" />
        <circle cx="12" cy="3" r="3" fill="#f8bd2e" />
      </svg>
      {'套打纸.jpg  WPS...'}
    </Task>
    <Tray>
      <svg width="12" height="12" viewBox="0 0 12 12" fill="none" stroke="#fff" strokeWidth="1.400"><path d="M1 9l5-6 5 6" /></svg>
      <svg width="16" height="16" viewBox="0 0 16 16" fill="none" stroke="#fff"><rect x="6" y="1" width="5" height="10" rx="2" fill="#fff" /><path d="M4 9c0 5 9 5 9 0M8.500 13v2M6 15h5" /></svg>
      <svg width="16" height="16" viewBox="0 0 16 16" fill="none" stroke="#fff"><path d="M4 5h11v8H4z" /><path d="M6 7h7v4H6z" fill="#fff" /><path d="M1 3h4v3H1zM2 1v2M4 1v2M3 6v3" /></svg>
      <svg width="14" height="16" viewBox="0 0 14 16" fill="none" stroke="#fff"><path d="M1 15C1 7 6 3 13 3M4 15c0-5 3-8 9-8M7 15c0-3 2-5 6-5" /><circle cx="11" cy="14" r="1.500" fill="#fff" /></svg>
      <svg width="16" height="16" viewBox="0 0 16 16" fill="none" stroke="#fff"><path d="M1 6h3l3-3v10l-3-3H1zM9 6c1 1 1 3 0 4M11 4c2 2 2 6 0 8M13 2c3 3 3 9 0 12" /></svg>
      <Lang>英</Lang>
      <Clock><span>17:53</span><span>2023-11-06</span></Clock>
    </Tray>
  </TaskBar>
)

export default function App() {
  return (
    <Page>
      <GlobalStyle />
      <TitleBar>
        <TitlePart $gap={21} $right={4}>
          [001](default)常嘉源(北京)信息技术有限公司
          <Caret $color="#fff" />
        </TitlePart>
        <TitlePart $left={17} $right={15} $gap={6}>
          <svg width="16" height="14" viewBox="0 0 16 14" fill="#fff">
            <path d="M2 6C2-1 14-1 14 6v1h2v4h-3c-2 4-8 4-10 0H0V7h2z" />
            <path d="M5 6h6v3c-1 3-5 3-6 0z" fill="#8b8b8b" />
          </svg>
          客户服务
          <Caret $color="#fff" />
        </TitlePart>
        <TitlePart $left={9} $right={13} $last>
          <svg width="8" height="8" viewBox="0 0 8 8" fill="#fff"><path d="M0 0h8v2H0zM0 4h8L4 8z" /></svg>
        </TitlePart>
      </TitleBar>
      <Workspace>
        <Rail><RailButton aria-label="展开" /></Rail>
        <Sidebar />
        <Main>
          <TabBar>
            <Tab $width={98}>我的桌面</Tab>
            <Tab $width={107} $active>填制凭证<Cross size={8} weight={2} color="#b3bcc4" /></Tab>
            <TabTools>
              <ToolCaret $color="#fff" />
              <Help aria-label="帮助">?</Help>
              <BarcodeSearch>
                <SearchIcon color="#fff" />
                <SearchInput $hint="#86b6ec" placeholder="单据条码搜索" aria-label="单据条码搜索" />
              </BarcodeSearch>
            </TabTools>
          </TabBar>
          <RibbonBar />
          <VoucherSheet />
        </Main>
      </Workspace>
      <StatusBar>
        就绪
        <StatusSpace />
        <StatusCell>demo(账套主管)</StatusCell>
        <StatusCell>2022-10-30</StatusCell>
        <PhoneCell><span>4006-600-588</span><span>用友网络科技股份有限公司</span></PhoneCell>
      </StatusBar>
      <GreyStrip />
      <WhiteStrip><Grip /></WhiteStrip>
      <Taskbar />
      <PrintDialog />
      <PageSetup />
      <Pointer>
        <svg width="13" height="20" viewBox="0 0 13 20"><path d="M1 1v15l3-3 3 6 3-1-3-6h5z" fill="#fff" stroke="#222" /></svg>
      </Pointer>
      <Timer>02:38</Timer>
    </Page>
  )
}
